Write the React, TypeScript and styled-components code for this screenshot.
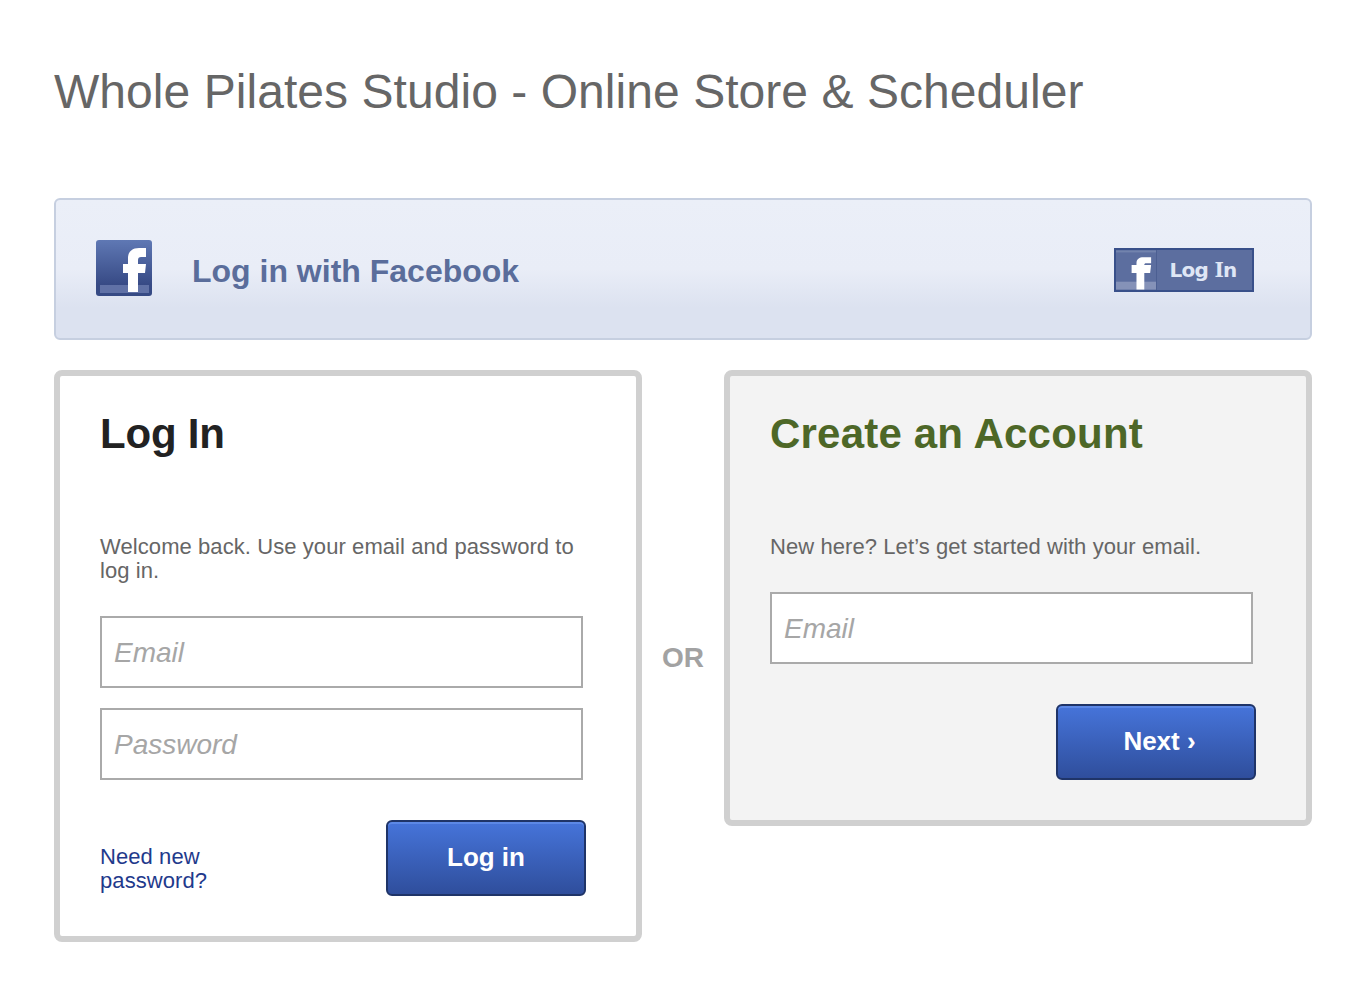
import React from "react";
import styled, { createGlobalStyle } from "styled-components";

const GlobalStyle = createGlobalStyle`
  html, body {
    margin: 0;
    padding: 0;
    background: #fff;
    font-family: "Liberation Sans", Arial, sans-serif;
  }
  * {
    box-sizing: border-box;
  }
`;

const Page = styled.div`
  width: 1366px;
  height: 990px;
  padding: 65px 54px 0;
  overflow: hidden;
`;

const Title = styled.h1`
  margin: 0 0 73px;
  height: 60px;
  font-size: 48px;
  line-height: 54px;
  font-weight: 400;
  color: #666;
  letter-spacing: 0.05px;
  white-space: nowrap;
`;

const FacebookBar = styled.div`
  height: 142px;
  display: flex;
  align-items: center;
  padding: 0 56px 0 40px;
  border: 2px solid #c6cfe0;
  border-radius: 6px;
  background: linear-gradient(#ebeff8 0%, #e9edf7 50%, #dce2f0 78%, #dce2f0 100%);
`;

const FacebookBadge = styled.svg`
  display: block;
  width: 56px;
  height: 56px;
  margin-top: -3px;
  flex: none;
`;

const FacebookLabel = styled.div`
  margin-left: 40px;
  padding-top: 4px;
  flex: 1;
  font-size: 32px;
  font-weight: 700;
  color: #5a6d9b;
`;

const FacebookButton = styled.button`
  display: flex;
  width: 140px;
  height: 44px;
  margin-top: 1px;
  padding: 0;
  border: 2px solid #39508a;
  background: #5c6e9f;
  cursor: pointer;
  font-family: inherit;
`;

const FacebookButtonIcon = styled.svg`
  display: block;
  width: 41px;
  height: 40px;
  flex: none;
  border-right: 1px solid #4c5f92;
`;

const FacebookButtonText = styled.span`
  flex: 1;
  padding-right: 3px;
  font-family: "DejaVu Sans", sans-serif;
  font-size: 20px;
  font-weight: 700;
  line-height: 40px;
  text-align: center;
  color: #dfe6f5;
  letter-spacing: -0.7px;
`;

const SerifLetter = styled.span`
  font-family: "DejaVu Serif", serif;
`;

const Columns = styled.div`
  display: flex;
  align-items: flex-start;
  margin-top: 30px;
`;

const Card = styled.section<{ $muted?: boolean }>`
  width: 588px;
  flex: none;
  padding: 36px 52px 0 40px;
  border: 6px solid #d0d0d0;
  border-radius: 8px;
  background: ${(p) => (p.$muted ? "#f3f3f3" : "#fff")};
`;

const CardTitle = styled.h2<{ $green?: boolean }>`
  margin: 0 0 79px;
  height: 44px;
  font-size: 42px;
  line-height: 44px;
  font-weight: 700;
  letter-spacing: ${(p) => (p.$green ? "0.2px" : "-0.2px")};
  color: ${(p) => (p.$green ? "#4d6727" : "#222")};
`;

const Intro = styled.p`
  margin: 0 0 33px;
  font-size: 22px;
  line-height: 24px;
  color: #666;
  letter-spacing: 0.08px;
`;

const Field = styled.input`
  display: block;
  width: 483px;
  height: 72px;
  margin: 0 0 20px;
  padding: 2px 12px 0;
  border: 2px solid #aaa;
  border-radius: 0;
  outline: none;
  background: #fff;
  font-family: inherit;
  font-size: 28px;
  font-style: italic;
  color: #666;
  &::placeholder {
    color: #a6a6a6;
    opacity: 1;
  }
`;

const Actions = styled.div<{ $end?: boolean }>`
  display: flex;
  align-items: center;
  justify-content: ${(p) => (p.$end ? "flex-end" : "space-between")};
  width: 486px;
  margin-top: 40px;
  padding-bottom: 40px;
`;

const ForgotLink = styled.a`
  width: 130px;
  margin-top: 22px;
  font-size: 22px;
  line-height: 24px;
  color: #1f3a8c;
  text-decoration: none;
  letter-spacing: 0.08px;
`;

const PrimaryButton = styled.button<{ $next?: boolean }>`
  width: 200px;
  height: 76px;
  padding: 0 0 2px ${(p) => (p.$next ? "7px" : "0")};
  border: 2px solid #1f3468;
  border-radius: 6px;
  background: linear-gradient(#4674da 0%, #2f4e9c 100%);
  box-shadow: inset 0 2px 0 #5c88e6;
  color: #fff;
  font-family: inherit;
  font-size: 26px;
  font-weight: 700;
  cursor: pointer;
`;

const OrLabel = styled.div`
  width: 82px;
  flex: none;
  padding-top: 270px;
  font-size: 28px;
  line-height: 36px;
  font-weight: 700;
  text-align: center;
  color: #a2a2a2;
`;

export default function App() {
  return (
    <>
      <GlobalStyle />
      <Page>
        <Title>Whole Pilates Studio - Online Store &amp; Scheduler</Title>

        <FacebookBar>
          <FacebookBadge viewBox="0 0 56 56">
            <defs>
              <linearGradient id="fbBadge" x1="0" y1="0" x2="0" y2="1">
                <stop offset="0" stopColor="#5f78b4" />
                <stop offset="0.8" stopColor="#374a85" />
                <stop offset="1" stopColor="#364a84" />
              </linearGradient>
              <filter id="fbSoft" x="-10%" y="-10%" width="120%" height="120%">
                <feGaussianBlur stdDeviation="0.6" />
              </filter>
            </defs>
            <rect width="56" height="56" rx="3" fill="url(#fbBadge)" />
            <rect x="4" y="45" width="49" height="8" fill="#6071a6" filter="url(#fbSoft)" />
            <path
              d="M32 52V33h-5v-9h5v-6c0-7 5-10 11-10h7v9h-5c-2 0-3 1-3 3v4h8l-1 9h-7v19z"
              fill="#fff"
              filter="url(#fbSoft)"
            />
          </FacebookBadge>
          <FacebookLabel>Log in with Facebook</FacebookLabel>
          <FacebookButton type="button">
            <FacebookButtonIcon viewBox="0 0 41 40">
              <rect x="0" y="32" width="41" height="8" fill="#8592b8" />
              <rect x="0" y="0" width="41" height="2" fill="#7283ad" />
              <path
                d="M21 40V23h-5v-8h5v-2c0-4 3-6 7-6h8v6h-5c-1.500 0-2 .5-2 2h7l-1 8h-6v17z"
                fill="#fff"
              />
            </FacebookButtonIcon>
            <FacebookButtonText>
              Log <SerifLetter>I</SerifLetter>n
            </FacebookButtonText>
          </FacebookButton>
        </FacebookBar>

        <Columns>
          <Card>
            <CardTitle>Log In</CardTitle>
            <Intro>Welcome back. Use your email and password to log in.</Intro>
            <Field type="text" placeholder="Email" />
            <Field type="password" placeholder="Password" />
            <Actions>
              <ForgotLink href="#">Need new password?</ForgotLink>
              <PrimaryButton type="button">Log in</PrimaryButton>
            </Actions>
          </Card>

          <OrLabel>OR</OrLabel>

          <Card $muted>
            <CardTitle $green>Create an Account</CardTitle>
            <Intro>New here? Let’s get started with your email.</Intro>
            <Field type="text" placeholder="Email" />
            <Actions $end>
              <PrimaryButton type="button" $next>
                Next ›
              </PrimaryButton>
            </Actions>
          </Card>
        </Columns>
      </Page>
    </>
  );
}
